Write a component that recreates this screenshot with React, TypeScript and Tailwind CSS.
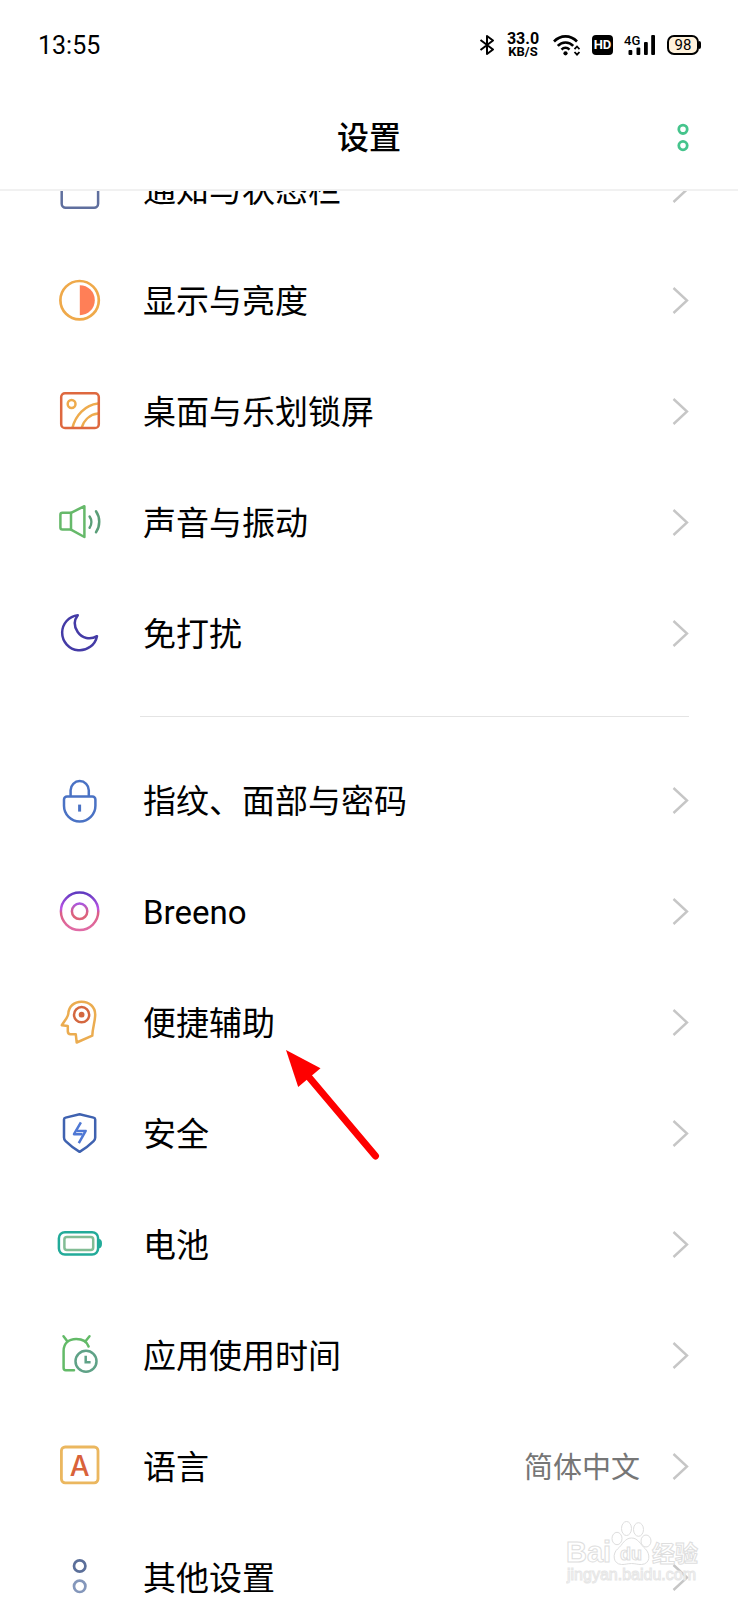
import React from "react";

interface SettingItem {
  id: string;
  label: string;
  icon: React.ReactNode;
  value?: string;
  pointed?: boolean;
}

function Icon({ children }: { children: React.ReactNode }) {
  return (
    <svg
      viewBox="0 0 47 47"
      className="h-[47px] w-[47px] shrink-0"
      fill="none"
      strokeWidth="2.5"
      strokeLinecap="round"
      strokeLinejoin="round"
      aria-hidden="true"
    >
      {children}
    </svg>
  );
}

const displaySettings: SettingItem[] = [
  {
    id: "notification",
    label: "通知与状态栏",
    icon: (
      <Icon>
        <rect x="5.7" y="5" width="36.4" height="36.7" rx="4" stroke="#5f6f9e" />
      </Icon>
    ),
  },
  {
    id: "display",
    label: "显示与亮度",
    icon: (
      <Icon>
        <circle cx="23.6" cy="23.2" r="19.2" stroke="#efa94a" strokeWidth="2.7" />
        <path d="M23.8 8.2a15 15 0 0 1 0 30z" fill="#ff7f57" />
      </Icon>
    ),
  },
  {
    id: "desktop",
    label: "桌面与乐划锁屏",
    icon: (
      <Icon>
        <g stroke="#eeab4d">
          <circle cx="15.6" cy="16" r="3.9" />
          <path d="M16.5 39.6C19.5 27.5 29 17 42 15.5" />
          <path d="M25.7 39.6C28 32 34 26.5 42 25.5" />
        </g>
        <rect x="5.2" y="5.2" width="37.6" height="34.8" rx="3.8" stroke="#de683f" />
      </Icon>
    ),
  },
  {
    id: "sound",
    label: "声音与振动",
    icon: (
      <Icon>
        <g stroke="#66b96a">
          <path d="M15 13.8H6.4a2 2 0 0 0-2 2V28.6a2 2 0 0 0 2 2H15z" />
          <path d="M15 13.8L28.4 7.2V38L15 30.6" />
        </g>
        <g stroke="#5a9e78">
          <path d="M33.6 17.5C35.9 20.8 35.9 25.4 33.6 28.7" />
          <path d="M40 12.3C44.3 18.5 44.3 27 40 33.3" />
        </g>
      </Icon>
    ),
  },
  {
    id: "disturb",
    label: "免打扰",
    icon: (
      <Icon>
        <path
          d="M21.8 5.2A17.6 17.6 0 1 0 41 26.2C34 30.3 26 28.2 21.7 22C17.8 16.3 17.8 10.3 21.8 5.2z"
          stroke="#443ba6"
        />
      </Icon>
    ),
  },
];

const systemSettings: SettingItem[] = [
  {
    id: "password",
    label: "指纹、面部与密码",
    icon: (
      <Icon>
        <g stroke="#4a72c4">
          <path d="M14.6 18.8V13.2a9.1 9.1 0 0 1 18.2 0V18.8" />
          <path d="M11 19.4H36.4a3 3 0 0 1 3 3V28.8a15.7 15.7 0 0 1-31.4 0V22.4a3 3 0 0 1 3-3z" />
          <path d="M23.6 27.6V34.6" strokeWidth="3" strokeLinecap="butt" />
        </g>
      </Icon>
    ),
  },
  {
    id: "breeno",
    label: "Breeno",
    icon: (
      <Icon>
        <defs>
          <linearGradient id="breenoOuter" x1="0" y1="0" x2="0" y2="1">
            <stop offset="0" stopColor="#5f3bc0" />
            <stop offset="0.42" stopColor="#bb52e6" />
            <stop offset="0.55" stopColor="#dc5f84" />
            <stop offset="1" stopColor="#e06ba6" />
          </linearGradient>
          <linearGradient id="breenoInner" x1="0" y1="0" x2="0" y2="1">
            <stop offset="0" stopColor="#a957e0" />
            <stop offset="0.6" stopColor="#dc6180" />
            <stop offset="1" stopColor="#dc6478" />
          </linearGradient>
        </defs>
        <circle cx="23.6" cy="23.3" r="18.7" stroke="url(#breenoOuter)" />
        <circle cx="23.6" cy="23.3" r="7.7" stroke="url(#breenoInner)" />
      </Icon>
    ),
  },
  {
    id: "assist",
    label: "便捷辅助",
    pointed: true,
    icon: (
      <Icon>
        <path
          d="M25.5 2.7C18 2.7 12.7 7.5 12.3 14.8C12.2 17.5 10.4 19.3 5.8 26.2L11.8 27V32.4C11.9 34.3 12.7 35.3 14.5 35.3H19.8L20.7 43.5L36.3 36.6C36.6 28 39.2 22.5 39.2 15.5C39.2 7.8 33.3 2.7 25.5 2.7z"
          stroke="#ebac50"
        />
        <circle cx="25.6" cy="15.7" r="7.6" stroke="#d4673f" />
        <circle cx="25.6" cy="15.7" r="2.9" fill="#d4673f" />
      </Icon>
    ),
  },
  {
    id: "security",
    label: "安全",
    icon: (
      <Icon>
        <path
          d="M23.6 4.2L37.6 7.6Q39.2 8 39.2 9.6V27.5Q39.2 29.7 37.6 31.2C34 34.8 29 38.6 23.6 41.8C18.2 38.6 13.2 34.8 9.6 31.2Q8 29.7 8 27.5V9.6Q8 8 9.6 7.6z"
          stroke="#3f62b0"
        />
        <g stroke="#4f78d4" strokeLinecap="butt">
          <path d="M24.9 12.4L18 24.2H26.5" />
          <path d="M22.8 33.2L29.7 20.9H21" />
        </g>
      </Icon>
    ),
  },
  {
    id: "battery",
    label: "电池",
    icon: (
      <Icon>
        <rect x="2.9" y="11.2" width="39.2" height="22.4" rx="6" stroke="#22ab99" />
        <path d="M43 18C45 18 46 19.5 46 22.6C46 25.7 45 27.3 43 27.3z" fill="#22ab99" />
        <rect x="8.4" y="16" width="28.8" height="12.9" rx="2.5" stroke="#82bd95" />
      </Icon>
    ),
  },
  {
    id: "usage",
    label: "应用使用时间",
    icon: (
      <Icon>
        <g stroke="#63ba68">
          <path d="M18 38.2H9.8a2.2 2.2 0 0 1-2.2-2.2V19C7.6 11.5 12.5 7 20.2 7C26.5 7 31 9.8 32.6 14.5" />
          <path d="M7.5 4.3L11.3 9.2" />
          <path d="M33.5 4.3L29.5 9.2" />
        </g>
        <g stroke="#5fa287">
          <circle cx="30" cy="29.2" r="10.5" />
          <path d="M29.7 23.8V30.2H34.6" strokeLinecap="butt" strokeLinejoin="miter" />
        </g>
      </Icon>
    ),
  },
  {
    id: "language",
    label: "语言",
    value: "简体中文",
    icon: (
      <Icon>
        <rect x="5.4" y="4" width="36.6" height="35.8" rx="3.8" stroke="#ebb75f" strokeWidth="2.8" />
        <text
          x="23.7"
          y="32.5"
          textAnchor="middle"
          fill="#d9623a"
          stroke="none"
          className="font-['Inter',sans-serif] text-[28px] font-medium"
        >
          A
        </text>
      </Icon>
    ),
  },
  {
    id: "other",
    label: "其他设置",
    icon: (
      <Icon>
        <circle cx="23.7" cy="12" r="5.7" stroke="#5b6f9a" strokeWidth="2.7" />
        <circle cx="23.7" cy="32.3" r="5.7" stroke="#8497bb" strokeWidth="2.7" />
      </Icon>
    ),
  },
];

function StatusBar() {
  return (
    <div className="flex h-[90px] items-center justify-between pr-[37px] pl-[38px]">
      <span className="pt-0.5 text-[25px] leading-8">13:55</span>
      <div className="flex items-center gap-3">
        <svg viewBox="0 0 16 20" className="h-5 w-4" fill="none" stroke="#000" strokeWidth="2">
          <path d="M1.5 5L14 14.5L8 19V1L14 5.5L1.5 15" strokeLinejoin="round" />
        </svg>
        <div className="mr-0.5 flex w-8 flex-col items-center font-bold">
          <span className="text-base leading-[13px]">33.0</span>
          <span className="text-[13px] leading-[13px]">KB/S</span>
        </div>
        <svg viewBox="0 0 27 22" className="h-[22px] w-[27px]" fill="none" stroke="#000" strokeWidth="2.6">
          <path d="M1 7.5C7.5 0.7 17.5 0.7 24 7.5" />
          <path d="M4.8 11.8C9 7.3 16 7.3 20.2 11.8" />
          <path d="M8.5 15.6C10.9 13.2 14.1 13.2 16.5 15.6" />
          <circle cx="12.5" cy="19.3" r="2.1" fill="#000" stroke="none" />
          <path d="M21.5 15.2L24 12.5L26.5 15.2M21.5 18L24 20.7L26.5 18" strokeWidth="1.8" />
        </svg>
        <span className="flex h-5 w-[21px] items-center justify-center rounded bg-black text-[13px] leading-5 font-bold text-white">
          HD
        </span>
        <svg viewBox="0 0 30 20" className="h-5 w-[30px] overflow-visible">
          <text x="-1" y="10" className="text-[13px] font-medium">
            4G
          </text>
          <rect x="3.5" y="15" width="3.8" height="5" rx="1" />
          <rect x="11.5" y="12.5" width="3.8" height="7.5" rx="1" />
          <rect x="19" y="7" width="3.8" height="13" rx="1" />
          <rect x="26.2" y="0" width="3.8" height="20" rx="1" />
        </svg>
        <div className="flex items-center">
          <span className="flex h-5 w-8 items-center justify-center rounded-[7px] border-2 border-black bg-[#fff2dc] text-[15px] leading-4">
            98
          </span>
          <span className="h-2 w-[2px] rounded-r bg-black" />
        </div>
      </div>
    </div>
  );
}

function Arrow() {
  return (
    <svg
      viewBox="0 0 94 110"
      className="pointer-events-none absolute top-[83px] left-[286px] z-10 h-[110px] w-[94px]"
      aria-hidden="true"
    >
      <path d="M0 0L34.5 18.3L12.2 37z" fill="#fe0000" />
      <path d="M22 26L89.500 106" stroke="#fe0000" strokeWidth="7" strokeLinecap="round" />
    </svg>
  );
}

function SettingRow({ item }: { item: SettingItem }) {
  return (
    <li className="relative">
      <a href={`#${item.id}`} className="flex h-[111px] items-center gap-10 pr-[49px] pl-14">
        {item.icon}
        <span className="flex-1 pt-[3px] text-[33px] leading-10">{item.label}</span>
        <span className="flex items-center gap-8">
          {item.value && (
            <span className="pt-0.5 text-[29px] leading-10 text-[#767676]">{item.value}</span>
          )}
          <svg
            viewBox="0 0 17 27"
            className="h-[27px] w-[17px]"
            fill="none"
            stroke="#c6c6c6"
            strokeWidth="2.4"
            aria-hidden="true"
          >
            <path d="M1.5 1L15 13.5L1.5 26" />
          </svg>
        </span>
      </a>
      {item.pointed && <Arrow />}
    </li>
  );
}

function Watermark() {
  return (
    <svg
      viewBox="0 0 136 68"
      className="pointer-events-none absolute right-[36px] bottom-[14px] h-[68px] w-[136px] font-['Liberation_Sans','Noto_Sans_CJK_SC',sans-serif]"
      fill="#fff"
      stroke="#dedede"
      strokeWidth="1"
    >
      <g fillOpacity="0.8">
        <text x="0" y="44" className="text-[29px] font-bold">
          Bai
        </text>
        <ellipse cx="51" cy="20.5" rx="5" ry="6.2" />
        <ellipse cx="60.500" cy="10.5" rx="5" ry="7" />
        <ellipse cx="72.5" cy="11.5" rx="5" ry="6.8" />
        <ellipse cx="80" cy="23" rx="5" ry="6" />
        <path d="M65.5 20C58.5 20 56.500 27 51.500 31C46.500 35 46.500 46 55.500 46.500C59.500 46.700 61.500 45.500 65.500 45.500C69.500 45.500 71.500 46.700 75.500 46.500C84.500 46 84.500 36 79.500 31C74.500 27 72.500 20 65.500 20z" />
        <text x="54" y="42" className="text-[18px] font-bold">
          du
        </text>
        <text x="86" y="44" className="text-[23px] font-bold">
          经验
        </text>
        <text x="1" y="62" className="text-[16px]" stroke="#e6e6e6">
          jingyan.baidu.com
        </text>
      </g>
    </svg>
  );
}

export default function App() {
  return (
    <div className="relative flex h-screen flex-col overflow-hidden bg-white font-['Roboto','Noto_Sans_CJK_SC',sans-serif] text-black">
      <header className="relative z-20 shrink-0 border-b-2 border-[#f1f1f1] bg-white">
        <StatusBar />
        <div className="grid h-[99px] grid-cols-3 items-center px-12 pb-[3px]">
          <h1 className="col-start-2 text-center text-[32px] leading-10 font-medium">设置</h1>
          <button type="button" aria-label="更多" className="justify-self-end">
            <svg viewBox="0 0 14 30" className="h-[30px] w-[14px]" fill="none" stroke="#45c48c" strokeWidth="2.8">
              <circle cx="7" cy="6.3" r="4.2" />
              <circle cx="7" cy="22.6" r="4.2" />
            </svg>
          </button>
        </div>
      </header>

      <main className="-mt-[57px] min-h-0 flex-1 overflow-hidden">
        <ul>
          {displaySettings.map((item) => (
            <SettingRow key={item.id} item={item} />
          ))}
        </ul>
        <hr className="mt-[27px] mr-[49px] mb-7 ml-[140px] border-[#e4e4e4]" />
        <ul>
          {systemSettings.map((item) => (
            <SettingRow key={item.id} item={item} />
          ))}
        </ul>
      </main>

      <Watermark />
    </div>
  );
}
